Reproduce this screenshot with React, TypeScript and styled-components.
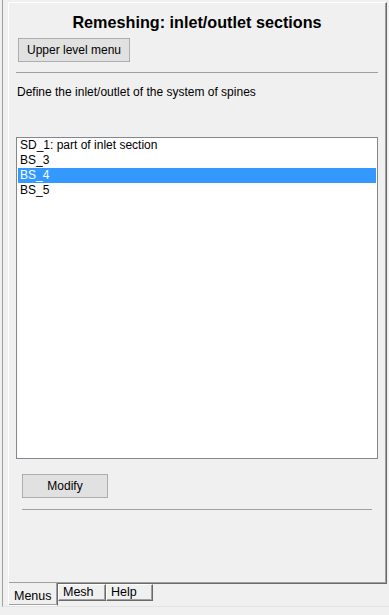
import React, { useState } from "react";
import styled, { createGlobalStyle } from "styled-components";

const GlobalStyle = createGlobalStyle`
  html, body {
    margin: 0;
    padding: 0;
    background: #f0f0f0;
  }
  body {
    font-family: "Liberation Sans", Arial, sans-serif;
    font-size: 12px;
    color: #000;
  }
`;

const Window = styled.div`
  width: 389px;
  height: 615px;
  box-sizing: border-box;
  padding-left: 2px;
  background: #f0f0f0;
  overflow: hidden;
`;

const Splitter = styled.div`
  height: 607px;
  box-sizing: border-box;
  border-left: 1px solid #a0a0a0;
  border-bottom: 1px solid #e3e3e3;
  padding-left: 5px;
  padding-top: 2px;
  display: flex;
  flex-direction: column;
`;

const Panel = styled.div`
  width: 379px;
  height: 582px;
  box-sizing: border-box;
  border-top: 1px solid #ffffff;
  border-left: 1px solid #ffffff;
  border-right: 1px solid #696969;
  border-bottom: 1px solid #696969;
  box-shadow: inset -1px -1px 0 #a0a0a0;
  display: flex;
  flex-direction: column;
  padding: 0 8px 0 7px;
`;

const Title = styled.div`
  font-family: "Liberation Sans", Arial, sans-serif;
  font-weight: bold;
  font-size: 16.2px;
  text-align: center;
  height: 18px;
  line-height: 18px;
  margin-top: 10px;
`;

const Button = styled.button<{ $width: number }>`
  width: ${(p) => p.$width}px;
  height: 24px;
  box-sizing: border-box;
  border: 1px solid #adadad;
  background: #e1e1e1;
  font-family: "Liberation Sans", Arial, sans-serif;
  font-size: 12px;
  color: #000;
  padding: 0;
  cursor: pointer;

  &:hover {
    background: #e5f1fb;
    border-color: #0078d7;
  }
`;

const TopRow = styled.div`
  margin-top: 7px;
  padding-left: 2px;
`;

const Separator = styled.div<{ $inset: number; $top: number }>`
  height: 1px;
  background: #a0a0a0;
  margin: ${(p) => p.$top}px ${(p) => p.$inset}px 0 ${(p) => p.$inset}px;
`;

const Description = styled.div`
  margin-top: 12px;
  height: 15px;
  line-height: 15px;
  padding-left: 1px;
`;

const ListBox = styled.div`
  margin-top: 37px;
  height: 322px;
  box-sizing: border-box;
  border: 1px solid #828790;
  background: #ffffff;
  padding: 0 1px;
  overflow: hidden;
`;

const ListItem = styled.div<{ $selected: boolean }>`
  height: 15px;
  line-height: 15px;
  padding-left: 2px;
  background: ${(p) => (p.$selected ? "#3399ff" : "transparent")};
  color: ${(p) => (p.$selected ? "#ffffff" : "#000000")};
  cursor: default;
  white-space: nowrap;
`;

const BottomRow = styled.div`
  margin-top: 15px;
  padding-left: 6px;
`;

const Tabs = styled.div`
  display: flex;
  align-items: flex-start;
  margin-top: -1px;
`;

const Tab = styled.div<{ $active: boolean }>`
  box-sizing: border-box;
  height: ${(p) => (p.$active ? 23 : 17)}px;
  margin-top: ${(p) => (p.$active ? 0 : 1)}px;
  padding: ${(p) => (p.$active ? "6px 4px 0 5px" : "0 4px 0 4px")};
  line-height: 15px;
  background: #f0f0f0;
  border-left: 1px solid #ffffff;
  border-right: 1px solid #696969;
  border-bottom: ${(p) => (p.$active ? "1px solid #ffffff" : "1px solid #696969")};
  border-top: ${(p) => (p.$active ? "none" : "1px solid #ffffff")};
  box-shadow: inset -1px -1px 0 #a0a0a0;
  font-size: 12.5px;
  cursor: default;
  position: relative;
  z-index: ${(p) => (p.$active ? 1 : 0)};
`;

const items = ["SD_1: part of inlet section", "BS_3", "BS_4", "BS_5"];
const tabs = [
  { name: "Menus", width: 50 },
  { name: "Mesh", width: 48 },
  { name: "Help", width: 47 },
];

export default function App() {
  const [selected, setSelected] = useState(2);
  const [tab, setTab] = useState(0);

  return (
    <Window>
      <GlobalStyle />
      <Splitter>
        <Panel>
          <Title>Remeshing: inlet/outlet sections</Title>
          <TopRow>
            <Button $width={112}>Upper level menu</Button>
          </TopRow>
          <Separator $inset={0} $top={10} />
          <Description>Define the inlet/outlet of the system of spines</Description>
          <ListBox>
            {items.map((item, i) => (
              <ListItem key={item} $selected={i === selected} onClick={() => setSelected(i)}>
                {item}
              </ListItem>
            ))}
          </ListBox>
          <BottomRow>
            <Button $width={86}>Modify</Button>
          </BottomRow>
          <Separator $inset={6} $top={11} />
        </Panel>
        <Tabs>
          {tabs.map((t, i) => (
            <Tab key={t.name} $active={i === tab} style={{ width: t.width }} onClick={() => setTab(i)}>
              {t.name}
            </Tab>
          ))}
        </Tabs>
      </Splitter>
    </Window>
  );
}
